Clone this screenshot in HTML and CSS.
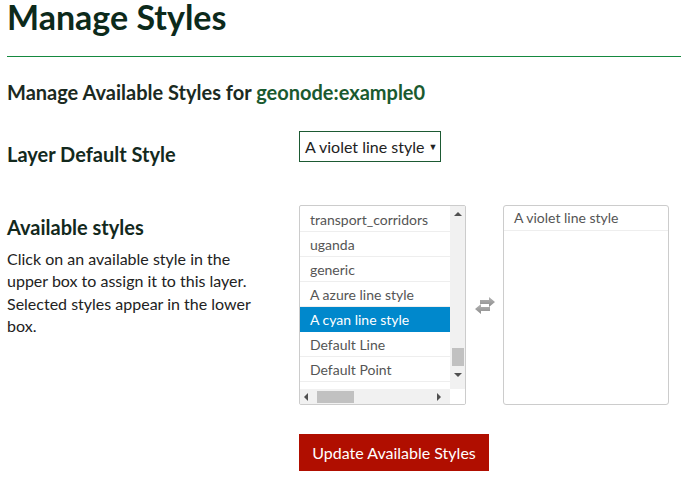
FILE: index.html
```html
<!DOCTYPE html>
<html>
<head>
<meta charset="utf-8">
<link rel="stylesheet" href="styles.css">
</head>
<body>
<div class="page">
  <h1 class="title">Manage Styles</h1>
  <hr class="rule">
  <h3 class="subtitle">Manage Available Styles for <span class="layer-name">geonode:example0</span></h3>

  <div class="row row-default">
    <h4 class="label">Layer Default Style</h4>
    <div class="select">A violet line style <span class="caret">▼</span></div>
  </div>

  <div class="row row-available">
    <div class="desc">
      <h4 class="label">Available styles</h4>
      <p class="help">Click on an available style in the upper box to assign it to this layer. Selected styles appear in the lower box.</p>
    </div>
    <div class="pickers">
      <div class="listbox">
        <ul class="items">
          <li class="item">transport_corridors</li>
          <li class="item">uganda</li>
          <li class="item">generic</li>
          <li class="item">A azure line style</li>
          <li class="item selected">A cyan line style</li>
          <li class="item">Default Line</li>
          <li class="item">Default Point</li>
        </ul>
        <div class="vscroll">
          <span class="arrow up"></span>
          <span class="vthumb"></span>
          <span class="arrow down"></span>
        </div>
        <div class="hscroll">
          <span class="arrow left"></span>
          <span class="hthumb"></span>
          <span class="arrow right"></span>
        </div>
        <div class="corner"></div>
      </div>
      <div class="swap">
        <svg width="22" height="17" viewBox="0 0 22 17">
          <defs>
            <linearGradient id="g1" x1="0" y1="0" x2="0" y2="1">
              <stop offset="0" stop-color="#b5b5b5"/>
              <stop offset="1" stop-color="#8c8c8c"/>
            </linearGradient>
          </defs>
          <path d="M6 3 H15 V0 L21 5 L15 10 V7 H6 Z" fill="url(#g1)"/>
          <path d="M16 10 H7 V7 L1 12 L7 17 V14 H16 Z" fill="url(#g1)"/>
        </svg>
      </div>
      <div class="chosen">
        <div class="chosen-item">A violet line style</div>
      </div>
    </div>
  </div>

  <div class="actions">
    <button class="btn">Update Available Styles</button>
  </div>
</div>
</body>
</html>
```

FILE: styles.css
```css
html, body {
  margin: 0;
  padding: 0;
  background: #fff;
}
body {
  font-family: Lato, "Open Sans", sans-serif;
  color: #222;
}
.page {
  padding: 0 0 0 7px;
}
.title {
  margin: 0;
  font-size: 34px;
  line-height: 34px;
  font-weight: 700;
  color: #0c2a1b;
}
.rule {
  border: 0;
  border-top: 1px solid #15893f;
  margin: 22px 0 0 0;
  height: 0;
}
.subtitle {
  margin: 23px 0 0 0;
  font-size: 20px;
  line-height: 24px;
  font-weight: 700;
  color: #1b2a22;
}
.layer-name {
  color: #1a5a2f;
}
.row {
  display: grid;
  grid-template-columns: 292px 1fr;
}
.row-default {
  margin-top: 27px;
}
.label {
  margin: 0;
  font-size: 20px;
  line-height: 24px;
  font-weight: 700;
  color: #13291d;
}
.row-default .label {
  padding-top: 11px;
}
.select {
  justify-self: start;
  box-sizing: border-box;
  height: 31px;
  width: 142px;
  border: 1px solid #1d5a33;
  font-size: 16px;
  line-height: 29px;
  padding-left: 5px;
  color: #222;
  white-space: nowrap;
}
.caret {
  font-size: 9px;
  vertical-align: 3px;
  margin-left: 0;
}
.row-available {
  margin-top: 39px;
}
.desc .label {
  padding-top: 10px;
}
.help {
  margin: 9px 0 0 0;
  font-size: 16px;
  line-height: 22.4px;
  color: #222;
  width: 256px;
}
.pickers {
  display: flex;
  align-items: stretch;
}
.listbox {
  box-sizing: border-box;
  width: 167px;
  height: 200px;
  border: 1px solid #ccc;
  border-radius: 2px;
  display: grid;
  grid-template-columns: 1fr 15px;
  grid-template-rows: 1fr 15px;
  overflow: hidden;
}
.items {
  list-style: none;
  margin: 0;
  padding: 1px 0 0 0;
  overflow: hidden;
}
.item {
  height: 24px;
  line-height: 25px;
  border-bottom: 1px solid #eee;
  padding-left: 10px;
  font-size: 14px;
  color: #555;
  white-space: nowrap;
}
.item.selected {
  background: #0088cc;
  color: #fff;
  border-bottom-color: #0088cc;
}
.vscroll {
  background: #f1f1f1;
  display: flex;
  flex-direction: column;
  align-items: center;
  padding-top: 6px;
}
.vthumb {
  width: 12px;
  height: 18px;
  background: #c1c1c1;
  margin-top: 132px;
}
.arrow {
  width: 0;
  height: 0;
  border: 4px solid transparent;
}
.arrow.up {
  border-top: 0;
  border-bottom: 4px solid #505050;
}
.arrow.down {
  margin-top: 7px;
  border-bottom: 0;
  border-top: 4px solid #505050;
}
.hscroll {
  background: #f1f1f1;
  display: flex;
  align-items: center;
  padding-left: 4px;
}
.hthumb {
  width: 37px;
  height: 12px;
  background: #c1c1c1;
  margin-left: 9px;
}
.arrow.left {
  border-left: 0;
  border-right: 4px solid #505050;
}
.arrow.right {
  border-right: 0;
  border-left: 4px solid #505050;
  margin-left: 83px;
}
.corner {
  background: #fff;
}
.swap {
  width: 37px;
  display: flex;
  align-items: center;
  justify-content: center;
}
.chosen {
  box-sizing: border-box;
  width: 166px;
  height: 200px;
  border: 1px solid #ccc;
  border-radius: 3px;
}
.chosen-item {
  height: 24px;
  line-height: 24px;
  border-bottom: 1px solid #eee;
  padding-left: 10px;
  font-size: 14px;
  color: #555;
}
.actions {
  padding-left: 292px;
  margin-top: 29px;
}
.btn {
  border: 0;
  border-radius: 0;
  background: #b00e00;
  color: #fff;
  font-family: Lato, sans-serif;
  font-size: 16px;
  height: 37px;
  width: 190px;
  padding: 0;
}
```
